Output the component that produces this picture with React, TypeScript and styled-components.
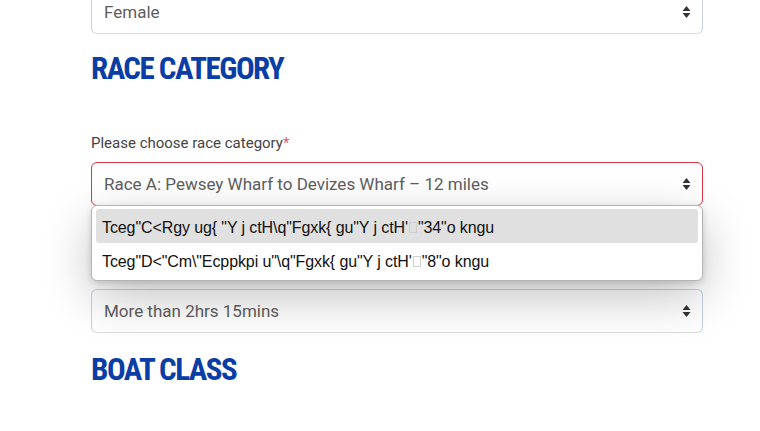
import React from 'react';
import styled, { createGlobalStyle } from 'styled-components';

const GlobalStyle = createGlobalStyle`
    html, body {
        margin: 0;
        padding: 0;
        background: #ffffff;
        overflow: hidden;
    }
    body {
        font-family: Roboto, "Liberation Sans", sans-serif;
    }
`

const Page = styled.div`
    width: 760px;
    height: 431px;
    overflow: hidden;
    padding-left: 91px;
    box-sizing: border-box;
`

const Form = styled.form`
    width: 612px;
    margin-top: -10px;
`

const Heading = styled.h2`
    margin: 0;
    font-family: "Roboto Condensed", Roboto, sans-serif;
    font-weight: 700;
    font-size: 31px;
    line-height: 38px;
    color: #0a3ea6;
    text-transform: uppercase;
    letter-spacing: -1.5px;
`

const Group = styled.div<{ $gap?: number }>`
    position: relative;
    margin-top: ${p => p.$gap ?? 0}px;
`

const Label = styled.label`
    display: block;
    font-size: 15px;
    line-height: 18px;
    color: #444;
    margin-bottom: 10px;
`

const Required = styled.span`
    color: #e8557a;
`

const SelectBox = styled.div<{ $invalid?: boolean }>`
    position: relative;
    height: 44px;
    box-sizing: border-box;
    display: flex;
    align-items: center;
    justify-content: space-between;
    padding: 0 11px 0 12px;
    border: 1px solid ${p => (p.$invalid ? '#dc3545' : '#c7cfe6')};
    border-bottom-color: ${p => (p.$invalid ? '#dc3545' : '#dcdcdc')};
    border-radius: 6px;
    background: #fff;
    font-size: 17px;
    color: #5e5e5e;
`

const Arrows = () => (
    <svg width="9" height="14" viewBox="0 0 9 14">
        <path d="M4.5 1 L8.5 6 L0.5 6 Z" fill="#333" />
        <path d="M4.5 13 L8.5 8 L0.5 8 Z" fill="#333" />
    </svg>
)

const Dropdown = styled.ul`
    position: absolute;
    left: -1px;
    right: -1px;
    top: 100%;
    z-index: 5;
    margin: 0;
    padding: 3px 4px;
    list-style: none;
    background: #fff;
    border: 1px solid #b4b4b4;
    border-radius: 6px;
    box-shadow: 0 16px 48px rgba(0, 0, 0, 0.24), 0 2px 6px rgba(0, 0, 0, 0.15);
`

const Option = styled.li<{ $active?: boolean }>`
    height: 34px;
    display: flex;
    align-items: center;
    padding: 3px 0 0 6px;
    box-sizing: border-box;
    border-radius: 3px;
    background: ${p => (p.$active ? '#e0e0e0' : 'transparent')};
    font-family: "Liberation Sans", Arial, sans-serif;
    font-size: 16px;
    color: #111;
    white-space: pre;
    letter-spacing: -0.1px;
`

const Tofu = styled.span`
    display: inline-block;
    width: 8px;
    height: 11px;
    margin: 0 1px;
    border: 1px solid #cfcfcf;
    box-sizing: border-box;
`

const options = [
    { head: `Tceg"C<Rgy ug{ "Y j ctH\\q"Fgxk{ gu"Y j ctH'`, tail: `"34"o kngu` },
    { head: `Tceg"D<"Cm\\"Ecppkpi u"\\q"Fgxk{ gu"Y j ctH'`, tail: `"8"o kngu` },
]

export default function App(): JSX.Element {
    return (
        <Page>
            <GlobalStyle />
            <Form>
                <SelectBox>
                    <span>Female</span>
                    <Arrows />
                </SelectBox>

                <Group $gap={16}>
                    <Heading>Race Category</Heading>
                </Group>

                <Group $gap={46}>
                    <Label>Please choose race category<Required>*</Required></Label>
                    <SelectBox $invalid>
                        <span>Race A: Pewsey Wharf to Devizes Wharf – 12 miles</span>
                        <Arrows />
                        <Dropdown>
                            {options.map((o, i) => (
                                <Option key={i} $active={i === 0}>
                                    {o.head}<Tofu />{o.tail}
                                </Option>
                            ))}
                        </Dropdown>
                    </SelectBox>
                </Group>

                <Group $gap={83}>
                    <SelectBox>
                        <span>More than 2hrs 15mins</span>
                        <Arrows />
                    </SelectBox>
                </Group>

                <Group $gap={18}>
                    <Heading>Boat Class</Heading>
                </Group>
            </Form>
        </Page>
    )
}
